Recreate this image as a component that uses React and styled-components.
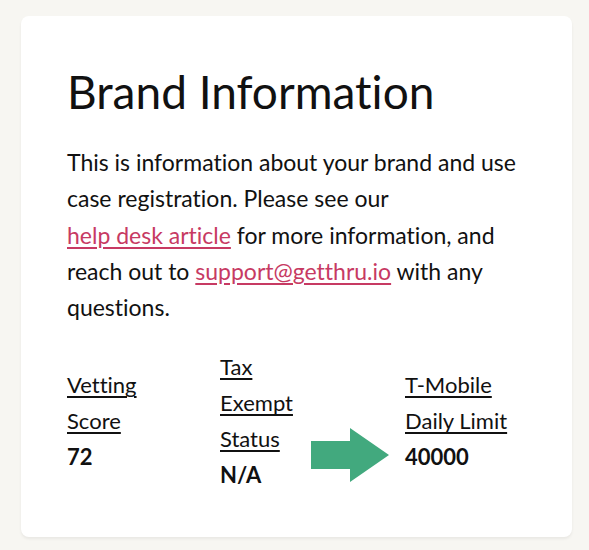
import styled, { createGlobalStyle } from 'styled-components';

const GlobalStyle = createGlobalStyle`
  body {
    margin: 0;
    background: #f7f6f2;
    font-family: Lato, "Liberation Sans", sans-serif;
    font-variant-ligatures: none;
    color: #111;
  }
`;

const Page = styled.div`
  padding: 16px 17px 13px 21px;
`;

const Card = styled.section`
  background: #fff;
  border-radius: 8px;
  box-shadow: 0 2px 3px rgba(0, 0, 0, 0.06);
  padding: 48px 40px 40px 46px;
  min-height: 433px;
`;

const Title = styled.h1`
  margin: 0 0 24px;
  font-size: 46px;
  font-weight: 400;
  line-height: 56px;
`;

const Intro = styled.p`
  margin: 0 0 24px;
  font-size: 23px;
  line-height: 36.3px;
  max-width: 480px;
`;

const TextLink = styled.a`
  color: #c73a63;
  white-space: nowrap;
  text-decoration: underline;
  text-underline-offset: 3px;
`;

const Stats = styled.div`
  display: flex;
  align-items: center;
`;

const Stat = styled.div`
  width: ${p => p.width}px;
  margin-right: ${p => p.gap}px;
  font-size: 22px;
  line-height: 36px;
`;

const Label = styled.div`
  text-decoration: underline;
  text-underline-offset: 3px;
`;

const Value = styled.div`
  font-weight: 700;
`;

const Arrow = styled.svg`
  align-self: flex-end;
  margin: 0 16px 11px 0;
  flex-shrink: 0;
`;

const App = () => (
  <>
    <GlobalStyle />
    <Page>
      <Card>
        <Title>Brand Information</Title>
        <Intro>
          This is information about your brand and use case registration. Please see our{' '}
          <TextLink href="#">help desk article</TextLink> for more information, and reach out to{' '}
          <TextLink href="#">support@getthru.io</TextLink> with any questions.
        </Intro>
        <Stats>
          <Stat width={120} gap={33}>
            <Label>Vetting Score</Label>
            <Value>72</Value>
          </Stat>
          <Stat width={85} gap={6}>
            <Label>Tax Exempt Status</Label>
            <Value>N/A</Value>
          </Stat>
          <Arrow width="78" height="54" viewBox="0 0 78 54">
            <path d="M0 13H39V0L78 27L39 54V41H0Z" fill="#42a97e" />
          </Arrow>
          <Stat width={120} gap={0}>
            <Label>T-Mobile Daily Limit</Label>
            <Value>40000</Value>
          </Stat>
        </Stats>
      </Card>
    </Page>
  </>
);

export default App;
